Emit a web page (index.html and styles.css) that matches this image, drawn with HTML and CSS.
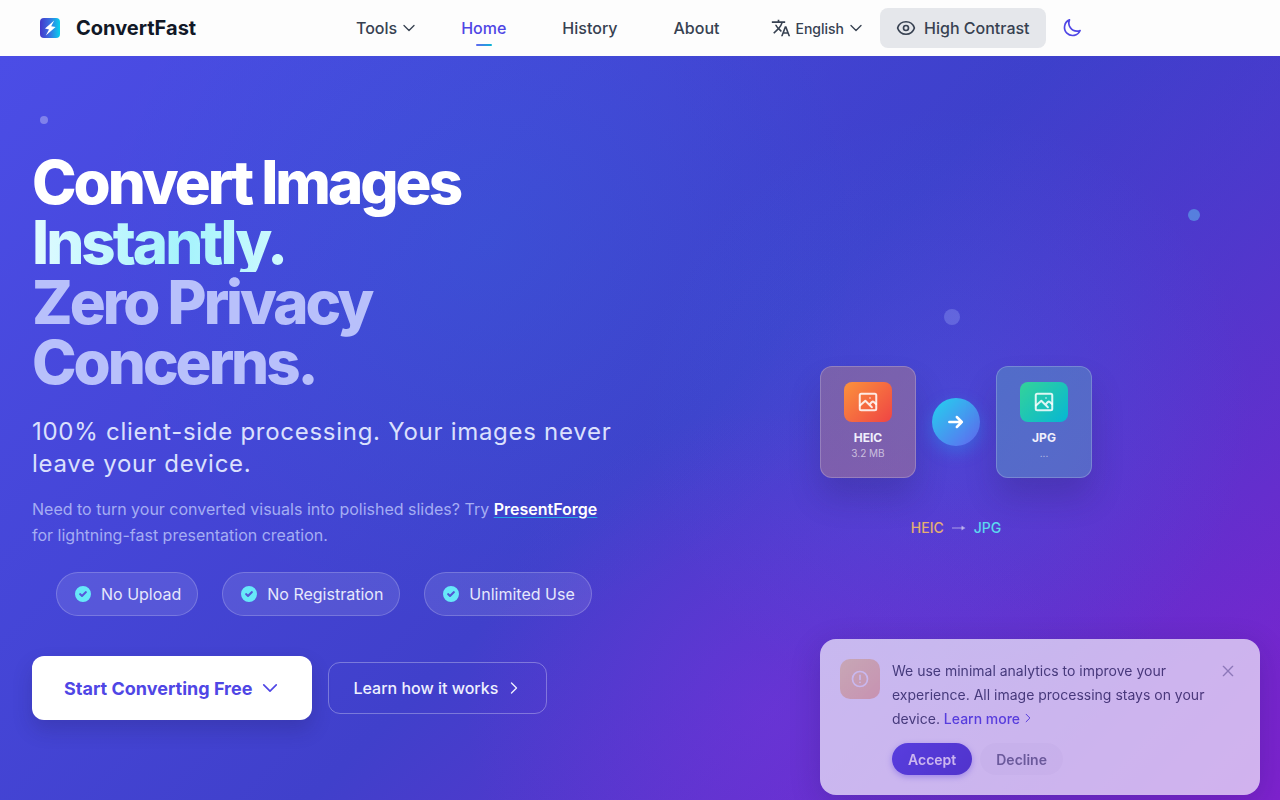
FILE: index.html
```html
<!DOCTYPE html>
<html lang="en">

<head>
    <meta charset="UTF-8">
    <meta name="viewport" content="width=device-width, initial-scale=1.0">
    <title>ConvertFast</title>
    <link rel="stylesheet" href="styles.css">
</head>

<body>
    <header class="navbar">
        <a href="#" class="brand">
            <svg width="20" height="20" viewBox="0 0 20 20">
                <defs>
                    <linearGradient id="logoGradient" x1="0" y1="0" x2="1" y2="0">
                        <stop offset="0" stop-color="#4338ca" />
                        <stop offset="0.45" stop-color="#3b6be0" />
                        <stop offset="1" stop-color="#06d0ee" />
                    </linearGradient>
                </defs>
                <rect width="20" height="20" rx="4" fill="url(#logoGradient)" />
                <path d="M14.2 2.6L5 10.6l4 .8L5.8 17.6 15.6 9l-4.4-.8z" fill="#fff" />
            </svg>
            <span>ConvertFast</span>
        </a>
        <nav class="nav-links">
            <button type="button" class="nav-item tools">Tools
                <svg class="icon" width="16" height="16" viewBox="0 0 24 24"><path d="M19.5 8.25l-7.5 7.5-7.5-7.5" /></svg>
            </button>
            <a href="#" class="nav-item active">Home</a>
            <a href="#" class="nav-item">History</a>
            <a href="#" class="nav-item">About</a>
        </nav>
        <div class="nav-actions">
            <button type="button" class="language">
                <svg width="20" height="20" viewBox="0 0 24 24" fill="currentColor"><path d="M12.87 15.07l-2.54-2.51.03-.03A17.52 17.52 0 0 0 14.07 6H17V4h-7V2H8v2H1v2h11.17C11.5 7.92 10.44 9.75 9 11.35 8.07 10.32 7.3 9.19 6.69 8h-2c.73 1.63 1.73 3.17 2.98 4.56l-5.09 5.02L4 19l5-5 3.11 3.11.76-2.04zM18.5 10h-2L12 22h2l1.12-3h4.75L21 22h2l-4.5-12zm-2.62 7l1.62-4.33L19.12 17h-3.24z" /></svg>
                <span>English</span>
                <svg class="icon" width="16" height="16" viewBox="0 0 24 24"><path d="M19.5 8.25l-7.5 7.5-7.5-7.5" /></svg>
            </button>
            <button type="button" class="contrast">
                <svg class="icon" width="20" height="20" viewBox="0 0 24 24"><path d="M2.04 12.32a1 1 0 0 1 0-.64C3.42 7.51 7.36 4.5 12 4.5s8.57 3.01 9.96 7.18a1 1 0 0 1 0 .64C20.58 16.49 16.64 19.5 12 19.5s-8.57-3.01-9.96-7.18z" /><circle cx="12" cy="12" r="3" /></svg>
                High Contrast
            </button>
            <button type="button" class="theme" aria-label="Dark mode">
                <svg class="icon" width="20" height="20" viewBox="0 0 24 24"><path d="M21.75 15A9.72 9.72 0 0 1 18 15.75 9.75 9.75 0 0 1 9 2.25a9.75 9.75 0 1 0 12.75 12.75z" /></svg>
            </button>
        </div>
    </header>

    <main class="hero">
        <!-- Floating dots -->
        <span class="dot dot-small"></span>
        <span class="dot dot-cyan"></span>
        <span class="dot dot-large"></span>

        <section class="intro">
            <h1>Convert Images <span class="highlight">Instantly.</span> <span class="muted">Zero Privacy Concerns.</span></h1>
            <p class="subtitle">100% client-side processing. Your images never leave your device.</p>
            <p class="note">Need to turn your converted visuals into polished slides? Try <a href="#">PresentForge</a> for lightning-fast presentation creation.</p>
            <ul class="features">
                <li>
                    <svg width="20" height="20" viewBox="0 0 20 20" fill="currentColor"><path fill-rule="evenodd" d="M10 18a8 8 0 1 0 0-16 8 8 0 0 0 0 16zm3.7-9.3a1 1 0 0 0-1.4-1.4L9 10.6 7.7 9.3a1 1 0 0 0-1.4 1.4l2 2a1 1 0 0 0 1.4 0l4-4z" /></svg>
                    No Upload
                </li>
                <li>
                    <svg width="20" height="20" viewBox="0 0 20 20" fill="currentColor"><path fill-rule="evenodd" d="M10 18a8 8 0 1 0 0-16 8 8 0 0 0 0 16zm3.7-9.3a1 1 0 0 0-1.4-1.4L9 10.6 7.7 9.3a1 1 0 0 0-1.4 1.4l2 2a1 1 0 0 0 1.4 0l4-4z" /></svg>
                    No Registration
                </li>
                <li>
                    <svg width="20" height="20" viewBox="0 0 20 20" fill="currentColor"><path fill-rule="evenodd" d="M10 18a8 8 0 1 0 0-16 8 8 0 0 0 0 16zm3.7-9.3a1 1 0 0 0-1.4-1.4L9 10.6 7.7 9.3a1 1 0 0 0-1.4 1.4l2 2a1 1 0 0 0 1.4 0l4-4z" /></svg>
                    Unlimited Use
                </li>
            </ul>
            <div class="buttons">
                <button type="button" class="btn-primary">Start Converting Free
                    <svg class="icon" width="20" height="20" viewBox="0 0 24 24"><path d="M19.5 8.25l-7.5 7.5-7.5-7.5" /></svg>
                </button>
                <button type="button" class="btn-outline">Learn how it works
                    <svg class="icon" width="16" height="16" viewBox="0 0 24 24"><path d="M8.25 4.5l7.5 7.5-7.5 7.5" /></svg>
                </button>
            </div>
        </section>

        <section class="demo">
            <div class="demo-row">
                <div class="file-card heic">
                    <div class="thumb">
                        <svg class="icon" width="24" height="24" viewBox="0 0 24 24"><rect x="3.75" y="3.75" width="16.5" height="16.5" rx="1.5" /><path d="M4 15.5l5.3-4.7 6.6 6.4M14 14l1.8-2a1.6 1.6 0 0 1 2 0l2.2 2" /><circle class="sun" cx="14" cy="8" r="1" /></svg>
                    </div>
                    <strong>HEIC</strong>
                    <small>3.2 MB</small>
                </div>
                <div class="arrow">
                    <svg class="icon" width="20" height="20" viewBox="0 0 24 24"><path d="M4 12h15M13 6l6 6-6 6" /></svg>
                </div>
                <div class="file-card jpg">
                    <div class="thumb">
                        <svg class="icon" width="24" height="24" viewBox="0 0 24 24"><rect x="3.75" y="3.75" width="16.5" height="16.5" rx="1.5" /><path d="M4 15.5l5.3-4.7 6.6 6.4M14 14l1.8-2a1.6 1.6 0 0 1 2 0l2.2 2" /><circle class="sun" cx="14" cy="8" r="1" /></svg>
                    </div>
                    <strong>JPG</strong>
                    <small>...</small>
                </div>
            </div>
            <p class="formats"><span class="from">HEIC</span><svg class="to-arrow" width="14" height="20" viewBox="0 0 14 20"><path d="M0 9.5h11v1H0z" /><path d="M9.5 7.5l4 2.5-4 2.5z" /></svg><span class="to">JPG</span></p>
        </section>
    </main>

    <!-- Analytics notice -->
    <aside class="notice">
        <div class="notice-icon">
            <svg class="icon" width="20" height="20" viewBox="0 0 24 24"><circle cx="12" cy="12" r="9" /><path d="M12 7.5v5M12 16v.2" /></svg>
        </div>
        <div class="notice-body">
            <p>We use minimal analytics to improve your experience. All image processing stays on your device. <a href="#">Learn more<svg class="icon" width="12" height="12" viewBox="0 0 24 24"><path d="M8.25 4.5l7.5 7.5-7.5 7.5" /></svg></a></p>
            <div class="notice-buttons">
                <button type="button" class="accept">Accept</button>
                <button type="button" class="decline">Decline</button>
            </div>
        </div>
        <button type="button" class="close" aria-label="Close">
            <svg class="icon" width="16" height="16" viewBox="0 0 24 24"><path d="M5 5l14 14M19 5L5 19" /></svg>
        </button>
    </aside>
</body>

</html>
```
FILE: styles.css
```css
* {
    box-sizing: border-box;
}

body {
    font-family: Inter, sans-serif;
    margin: 0;
    min-height: 100vh;
    display: flex;
    flex-direction: column;
    color: #374151;
    overflow-x: hidden;
}

button {
    font-family: inherit;
    border: none;
    background: none;
    padding: 0;
    color: inherit;
    cursor: pointer;
}

a {
    text-decoration: none;
    color: inherit;
}

.icon {
    fill: none;
    stroke: currentColor;
    stroke-width: 2;
    stroke-linecap: round;
    stroke-linejoin: round;
}

/* Navbar */
.navbar {
    display: flex;
    align-items: center;
    height: 56px;
    padding: 0 40px;
    background-color: #fdfdfd;
}

.brand {
    display: flex;
    align-items: center;
    gap: 16px;
    width: 300px;
    font-size: 20px;
    font-weight: 700;
    color: #111827;
}

.nav-links {
    display: flex;
    align-items: center;
    gap: 24px;
}

.nav-item {
    position: relative;
    display: flex;
    align-items: center;
    gap: 4px;
    padding: 8px 16px;
    font-size: 16px;
    line-height: 24px;
    font-weight: 500;
}

.nav-item.tools {
    margin-right: -12px;
}

.nav-item.active {
    color: #4f46e5;
}

.nav-item.active::after {
    content: '';
    position: absolute;
    bottom: 2px;
    left: 50%;
    width: 16px;
    height: 2px;
    margin-left: -8px;
    border-radius: 1px;
    background: linear-gradient(90deg, #6366f1, #06b6d4);
}

.nav-actions {
    display: flex;
    align-items: center;
    margin-left: 36px;
}

.language {
    display: flex;
    align-items: center;
    gap: 4px;
    margin-right: 16px;
    font-size: 14px;
    font-weight: 500;
}

.contrast {
    display: flex;
    align-items: center;
    gap: 8px;
    height: 40px;
    padding: 0 16px;
    margin-right: 16px;
    border-radius: 8px;
    background-color: #e5e7eb;
    font-size: 16px;
    font-weight: 500;
}

.theme {
    display: flex;
    color: #4f46e5;
}

/* Hero */
.hero {
    position: relative;
    flex: 1;
    display: grid;
    grid-template-columns: 1fr 1fr;
    gap: 56px;
    align-items: center;
    padding: 96px 32px 80px;
    background:
        radial-gradient(circle at 38% 25%, rgba(6, 150, 212, 0.12), transparent 40%),
        radial-gradient(circle at 60% 88%, rgba(147, 51, 234, 0.26), transparent 30%),
        radial-gradient(circle at 74% 48%, rgba(59, 130, 246, 0.18), transparent 30%),
        radial-gradient(circle at 100% 0%, rgba(50, 66, 205, 0.3), transparent 42%),
        linear-gradient(135deg, #4b4de6 0%, #4040cb 52%, #7e22ce 100%);
}

.dot {
    position: absolute;
    border-radius: 50%;
}

.dot-small {
    top: 60px;
    left: 40px;
    width: 8px;
    height: 8px;
    background-color: rgba(255, 255, 255, 0.3);
}

.dot-cyan {
    top: 153px;
    right: 80px;
    width: 12px;
    height: 12px;
    background-color: rgba(103, 232, 249, 0.4);
}

.dot-large {
    top: 253px;
    right: 320px;
    width: 16px;
    height: 16px;
    background-color: rgba(165, 180, 252, 0.3);
}

h1 {
    margin: 0 0 24px;
    max-width: 480px;
    font-size: 60px;
    line-height: 60px;
    font-weight: 800;
    letter-spacing: -0.05em;
    color: #fff;
}

.highlight {
    display: inline-block;
    background: linear-gradient(90deg, #e0fbff, #a5f3fc 60%, #cffafe);
    -webkit-background-clip: text;
    background-clip: text;
    color: transparent;
}

.muted {
    display: block;
    color: #b8c0fb;
}

.subtitle {
    margin: 0 0 16px;
    font-size: 24px;
    line-height: 32px;
    letter-spacing: 0.03em;
    color: #dbe0fd;
}

.note {
    margin: 0 0 24px;
    font-size: 16px;
    line-height: 26px;
    color: #a5adf3;
}

.note a {
    color: #fff;
    font-weight: 600;
    text-decoration: underline;
    text-decoration-color: #22a5e0;
    text-underline-offset: 2px;
}

.features {
    display: flex;
    gap: 24px;
    margin: 0 0 40px;
    padding: 0 0 0 24px;
    list-style: none;
}

.features li {
    display: flex;
    align-items: center;
    gap: 8px;
    height: 44px;
    padding: 0 16px;
    border: 1px solid rgba(255, 255, 255, 0.2);
    border-radius: 22px;
    background-color: rgba(255, 255, 255, 0.1);
    font-size: 16px;
    color: #e6e8fc;
    white-space: nowrap;
}

.features svg {
    color: #67e8f9;
}

.buttons {
    display: flex;
    align-items: center;
    gap: 16px;
}

.btn-primary {
    display: flex;
    align-items: center;
    gap: 8px;
    height: 64px;
    padding: 0 32px;
    border-radius: 12px;
    background-color: #fff;
    box-shadow: 0 10px 20px rgba(30, 27, 75, 0.2);
    font-size: 18px;
    font-weight: 700;
    color: #4f46e5;
}

.btn-outline {
    display: flex;
    align-items: center;
    gap: 8px;
    height: 52px;
    padding: 0 24px;
    border: 1px solid rgba(255, 255, 255, 0.3);
    border-radius: 12px;
    font-size: 16px;
    font-weight: 500;
    color: #eef0fe;
}

/* Conversion demo */
.demo {
    display: flex;
    flex-direction: column;
    align-items: center;
    padding-top: 32px;
    padding-right: 4px;
}

.demo-row {
    display: flex;
    align-items: center;
    gap: 16px;
}

.file-card {
    display: flex;
    flex-direction: column;
    align-items: center;
    width: 96px;
    height: 112px;
    padding-top: 15px;
    border: 1px solid rgba(255, 255, 255, 0.2);
    border-radius: 12px;
    box-shadow: 0 20px 32px rgba(30, 27, 75, 0.2);
}

.file-card.heic {
    background-color: rgba(185, 130, 130, 0.45);
}

.file-card.jpg {
    background-color: rgba(90, 160, 190, 0.45);
}

.thumb {
    display: flex;
    align-items: center;
    justify-content: center;
    width: 48px;
    height: 40px;
    margin-bottom: 8px;
    border-radius: 8px;
    color: rgba(255, 255, 255, 0.85);
}

.thumb .sun {
    fill: currentColor;
    stroke: none;
    opacity: 0.6;
}

.heic .thumb {
    background: linear-gradient(135deg, #fb923c, #ef4444);
}

.jpg .thumb {
    background: linear-gradient(135deg, #34d399, #06b6d4);
}

.file-card strong {
    font-size: 12px;
    line-height: 16px;
    color: #f0effc;
}

.file-card small {
    font-size: 10px;
    line-height: 15px;
    color: rgba(255, 255, 255, 0.6);
}

.arrow {
    display: flex;
    align-items: center;
    justify-content: center;
    width: 48px;
    height: 48px;
    border-radius: 50%;
    background: linear-gradient(135deg, #22d3ee, #6366f1);
    box-shadow: 0 6px 16px rgba(34, 150, 238, 0.4);
    color: #fff;
}

.arrow .icon {
    stroke-width: 3;
}

.formats {
    display: flex;
    gap: 8px;
    margin: 40px 0 0;
    font-size: 14px;
    line-height: 20px;
    font-weight: 500;
}

.from {
    color: #e5b072;
}

.to-arrow {
    fill: rgba(255, 255, 255, 0.5);
}

.to {
    color: #5cd9f0;
}

/* Notice */
.notice {
    position: fixed;
    right: 20px;
    bottom: 5px;
    display: flex;
    align-items: flex-start;
    width: 440px;
    padding: 20px;
    border-radius: 16px;
    background-color: #fff;
    box-shadow: 0 8px 32px rgba(30, 27, 75, 0.3);
    opacity: 0.65;
}

.notice-icon {
    display: flex;
    align-items: center;
    justify-content: center;
    width: 40px;
    height: 40px;
    margin-right: 12px;
    border-radius: 10px;
    background: linear-gradient(135deg, #fbbf24, #f97316);
    color: #fff;
    opacity: 0.4;
}

.notice-body {
    flex: 1;
}

.notice p {
    margin: 0 0 12px;
    font-size: 14px;
    line-height: 24px;
}

.notice a {
    font-weight: 500;
    color: #4f46e5;
}

.notice a .icon {
    margin-left: 2px;
}

.notice-buttons {
    display: flex;
    gap: 8px;
}

.notice-buttons button {
    height: 32px;
    padding: 0 16px;
    border-radius: 16px;
    font-size: 14px;
    font-weight: 600;
}

.accept {
    background: linear-gradient(135deg, #4f46e5, #4338ca);
    box-shadow: 0 2px 6px rgba(79, 70, 229, 0.4);
    color: #fff;
}

.notice .decline {
    background-color: rgba(107, 114, 128, 0.04);
    color: #6b7280;
}

.close {
    display: flex;
    padding: 4px;
    color: #9ca3af;
}
```
